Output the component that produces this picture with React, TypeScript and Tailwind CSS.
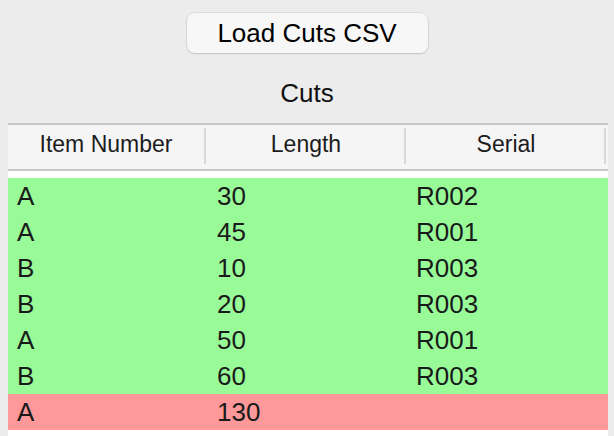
const cuts = [
    { item: 'A', length: 30, serial: 'R002' },
    { item: 'A', length: 45, serial: 'R001' },
    { item: 'B', length: 10, serial: 'R003' },
    { item: 'B', length: 20, serial: 'R003' },
    { item: 'A', length: 50, serial: 'R001' },
    { item: 'B', length: 60, serial: 'R003' },
    { item: 'A', length: 130, serial: '' },
];

const columns = ['Item Number', 'Length', 'Serial'];

const App = () => {
    return (
        <div
            className="w-[614px] h-[436px] overflow-hidden bg-[#ececec] flex flex-col items-center"
            style={{ fontFamily: '"Liberation Sans", Arial, sans-serif' }}
        >
            {/* Toolbar */}
            <button
                type="button"
                className="mt-[13px] w-[241px] h-[40px] rounded-[8px] bg-[#f7f7f7] text-[26px] leading-none text-black shadow-[0_0_0_1px_rgba(0,0,0,0.06),0_1px_2px_rgba(0,0,0,0.12)]"
            >
                Load Cuts CSV
            </button>
            <div className="mt-[25px] h-[30px] text-[26px] leading-[30px] text-[#111]">Cuts</div>

            {/* Table */}
            <div className="mt-[15px] self-start ml-[8px] w-[600px] flex-1 bg-white">
                <div className="flex h-[48px] bg-[#f5f5f5] border-y-2 border-[#c8c8c8]">
                    {columns.map((col) => (
                        <div key={col} className="w-[200px] flex items-center">
                            <div className="flex-1 pb-[5px] text-center text-[23px] text-[#1c1c1c]">{col}</div>
                            <div className="w-[2px] h-[36px] mb-[3px] mr-[2px] bg-[#d8d8d8]" />
                        </div>
                    ))}
                </div>
                <div className="pt-[7px]">
                    {cuts.map((cut, i) => (
                        <div
                            key={i}
                            className={`flex h-[36px] items-center text-[26px] text-[#1a1a1a] ${cut.serial ? 'bg-[#98fb98]' : 'bg-[#ff9999]'}`}
                        >
                            <div className="w-[200px] pl-[9px]">{cut.item}</div>
                            <div className="w-[200px] pl-[9px]">{cut.length}</div>
                            <div className="w-[200px] pl-[8px]">{cut.serial}</div>
                        </div>
                    ))}
                </div>
            </div>
        </div>
    );
};

export default App;
